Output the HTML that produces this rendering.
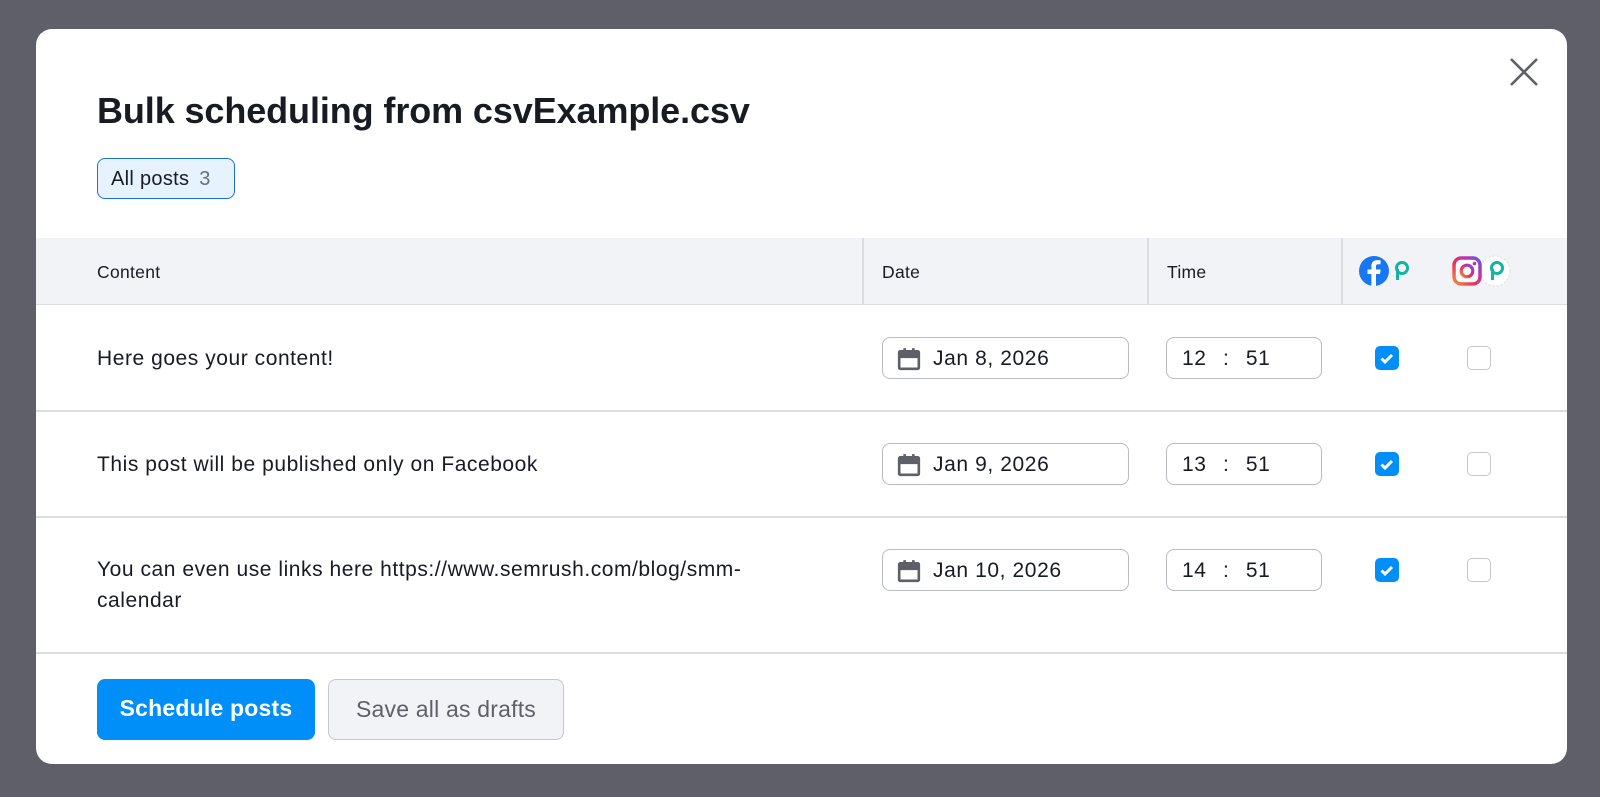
<!DOCTYPE html>
<html><head><meta charset="utf-8"><style>
*{box-sizing:border-box;margin:0;padding:0}
body{width:1600px;height:797px;background:#5e5f68;font-family:"Liberation Sans",sans-serif;position:relative;overflow:hidden;color:#191b23}
.modal{position:absolute;left:36px;top:29px;width:1531px;height:735px;background:#fff;border-radius:16px;overflow:hidden}
.a{position:absolute}
h1{position:absolute;left:61px;top:61px;font-size:36px;font-weight:bold;color:#191b23;letter-spacing:-0.1px}
.pill{left:61px;top:129px;width:138px;height:41px;border:1.5px solid #1a73d0;border-radius:8px;background:#e6f3ff;font-size:20px;padding:9px 0 0 13px;letter-spacing:0.3px}
.pill span{color:#6c6e79;margin-left:10px}
.head{left:0;top:209px;width:1531px;height:67px;background:#f2f3f7;border-bottom:1.5px solid #dcdde3}
.th{font-size:17.5px;letter-spacing:0.3px}
.vd{top:0;width:1.5px;height:67px;background:#dcdde3}
.hr{left:0;width:1531px;height:1.5px;background:#dcdde3}
.txt{font-size:21px;left:61px;line-height:31px;letter-spacing:0.55px}
.box{border:1.5px solid #b8bbc4;border-radius:8px;height:42px;font-size:21px;padding-top:9px;letter-spacing:0.6px}
.cb{width:24px;height:24px;border-radius:5px}
.cb.off{border:1.5px solid #c4c7cf}
.btn{height:61px;border-radius:8px;font-size:23px;text-align:center;line-height:59px;letter-spacing:0.2px}
</style></head><body>
<div class="modal">
<h1>Bulk scheduling from csvExample.csv</h1>
<svg class="a" style="left:1473px;top:28px" width="30" height="30" viewBox="0 0 30 30"><path d="M2 2L28 28M28 2L2 28" stroke="#5e5f68" stroke-width="2.6"/></svg>
<div class="a pill">All posts<span>3</span></div>
<div class="a head">
<div class="a th" style="left:61px;top:24px">Content</div>
<div class="a vd" style="left:826px"></div>
<div class="a th" style="left:846px;top:24px">Date</div>
<div class="a vd" style="left:1111px"></div>
<div class="a th" style="left:1131px;top:24px">Time</div>
<div class="a vd" style="left:1305px"></div>
<svg class="a" style="left:1323px;top:17px" width="56" height="32" viewBox="0 0 56 32"><circle cx="15" cy="16" r="15" fill="#1877f2"/><path d="M17 31V19h4l.6-4.5H17v-3c0-1.3.4-2.2 2.2-2.2h2.4v-4c-.4-.1-1.8-.2-3.5-.2-3.4 0-5.7 2.1-5.7 5.9v3.5H8.5V19h3.9v12z" fill="#fff"/><circle cx="43" cy="13" r="5.5" fill="none" stroke="#11b5a0" stroke-width="3"/><path d="M38.5 14v11" stroke="#11b5a0" stroke-width="3"/></svg>
<svg class="a" style="left:1415px;top:17px" width="60" height="32" viewBox="0 0 60 32"><defs><linearGradient id="g" x1="0" y1="1" x2="1" y2="0"><stop offset="0" stop-color="#fd8a3c"/><stop offset=".4" stop-color="#e4345e"/><stop offset=".7" stop-color="#c530a7"/><stop offset="1" stop-color="#5d5be0"/></linearGradient></defs><circle cx="44" cy="16" r="15" fill="#fff" stroke="#ddd" stroke-dasharray="2 2"/><rect x="1" y="1" width="30" height="30" rx="8" fill="#fff"/><rect x="3" y="3" width="26" height="26" rx="7" fill="none" stroke="url(#g)" stroke-width="3.5"/><circle cx="16" cy="16" r="5.8" fill="none" stroke="url(#g)" stroke-width="3.2"/><circle cx="23.5" cy="8.5" r="1.8" fill="#c530a7"/><circle cx="46" cy="13" r="5.5" fill="none" stroke="#11b5a0" stroke-width="3"/><path d="M41.5 14v11" stroke="#11b5a0" stroke-width="3"/></svg>
</div>

<div class="a txt" style="top:314px">Here goes your content!</div>
<div class="a txt" style="top:420px">This post will be published only on Facebook</div>
<div class="a txt" style="top:525px">You can even use links here https://www.semrush.com/blog/smm-<br>calendar</div>

<div class="a hr" style="top:381px"></div>
<div class="a hr" style="top:487px"></div>
<div class="a hr" style="top:623px"></div>

<div class="a box" style="left:846px;top:308px;width:247px;padding-left:50px">Jan 8, 2026</div>
<div class="a box" style="left:846px;top:414px;width:247px;padding-left:50px">Jan 9, 2026</div>
<div class="a box" style="left:846px;top:520px;width:247px;padding-left:50px">Jan 10, 2026</div>
<svg class="a" style="left:861px;top:318px" width="24" height="24" viewBox="0 0 22 22"><g fill="none" stroke="#5e5f68" stroke-width="2.4"><rect x="2" y="4" width="18" height="16" rx="1"/><path d="M2 9h18M7 1v5M15 1v5"/></g><rect x="2" y="4" width="18" height="5" fill="#5e5f68"/></svg>
<svg class="a" style="left:861px;top:424px" width="24" height="24" viewBox="0 0 22 22"><g fill="none" stroke="#5e5f68" stroke-width="2.4"><rect x="2" y="4" width="18" height="16" rx="1"/><path d="M2 9h18M7 1v5M15 1v5"/></g><rect x="2" y="4" width="18" height="5" fill="#5e5f68"/></svg>
<svg class="a" style="left:861px;top:530px" width="24" height="24" viewBox="0 0 22 22"><g fill="none" stroke="#5e5f68" stroke-width="2.4"><rect x="2" y="4" width="18" height="16" rx="1"/><path d="M2 9h18M7 1v5M15 1v5"/></g><rect x="2" y="4" width="18" height="5" fill="#5e5f68"/></svg>

<div class="a box" style="left:1130px;top:308px;width:156px;padding-left:15px;word-spacing:10px">12 : 51</div>
<div class="a box" style="left:1130px;top:414px;width:156px;padding-left:15px;word-spacing:10px">13 : 51</div>
<div class="a box" style="left:1130px;top:520px;width:156px;padding-left:15px;word-spacing:10px">14 : 51</div>

<svg class="a" style="left:1339px;top:317px" width="24" height="24"><rect width="24" height="24" rx="5" fill="#008ff8"/><path d="M6.5 12.5l3.5 3.5 7-7" fill="none" stroke="#fff" stroke-width="3"/></svg>
<svg class="a" style="left:1339px;top:423px" width="24" height="24"><rect width="24" height="24" rx="5" fill="#008ff8"/><path d="M6.5 12.5l3.5 3.5 7-7" fill="none" stroke="#fff" stroke-width="3"/></svg>
<svg class="a" style="left:1339px;top:529px" width="24" height="24"><rect width="24" height="24" rx="5" fill="#008ff8"/><path d="M6.5 12.5l3.5 3.5 7-7" fill="none" stroke="#fff" stroke-width="3"/></svg>
<div class="a cb off" style="left:1431px;top:317px"></div>
<div class="a cb off" style="left:1431px;top:423px"></div>
<div class="a cb off" style="left:1431px;top:529px"></div>

<div class="a btn" style="left:61px;top:650px;width:218px;background:#008ff8;color:#fff;font-weight:bold">Schedule posts</div>
<div class="a btn" style="left:292px;top:650px;width:236px;background:#f2f3f7;border:1.5px solid #c4c7cf;color:#5e5f68">Save all as drafts</div>
</div>
</body></html>
